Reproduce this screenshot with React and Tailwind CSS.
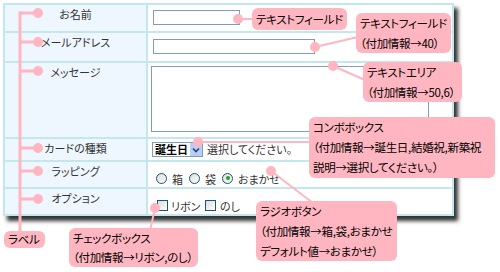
const PINK = '#ffb6c1'

function Callout({ className, children }) {
  return (
    <div
      className={`absolute bg-[#ffb6c1] rounded-[6px] px-[4px] text-[11.5px] tracking-[-0.3px] leading-[20px] text-black whitespace-nowrap ${className}`}
    >
      {children}
    </div>
  )
}

function Radio({ checked }) {
  return (
    <span className="w-[11px] h-[11px] rounded-full border border-[#1c5180] bg-gradient-to-br from-[#dcdcd7] to-white flex items-center justify-center">
      {checked && <span className="w-[4px] h-[4px] rounded-full bg-[#21a121]" />}
    </span>
  )
}

function Check() {
  return (
    <span className="w-[11px] h-[11px] border border-[#1c5180] bg-gradient-to-br from-[#dcdcd7] to-white" />
  )
}

function Row({ label, h, children, last }) {
  return (
    <div className={`flex ${last ? '' : 'border-b-2 border-[#c2e8ee]'}`} style={{ height: h }}>
      <div className="w-[143px] shrink-0 bg-[#eef7ff] border-r-2 border-[#c2e8ee] text-center text-[11px] leading-[13px] pt-[3px] text-[#333]">
        {label}
      </div>
      <div className="flex-1 bg-white">{children}</div>
    </div>
  )
}

export default function App() {
  const branches = [13, 42, 71, 148, 171, 199]

  return (
    <div className="relative w-[500px] h-[272px] bg-white overflow-hidden font-['Noto_Sans_CJK_JP',sans-serif] [font-feature-settings:'palt']">
      <div className="pl-[3px] pt-[3px]">
        <div className="w-[451px] border-2 border-[#c2e8ee] shadow-[4px_5px_4px_rgba(0,0,0,0.8)]">
          <Row label="お名前" h={28}>
            <div className="ml-[5px] mt-[5px] w-[87px] h-[15px] border border-[#7f9db9]" />
          </Row>
          <Row label="メールアドレス" h={30}>
            <div className="ml-[5px] mt-[6px] w-[162px] h-[15px] border border-[#7f9db9]" />
          </Row>
          <Row label="メッセージ" h={76}>
            <div className="ml-[3px] mt-[3px] w-[278px] h-[66px] border border-[#7f9db9]" />
          </Row>
          <Row label="カードの種類" h={23}>
            <div className="ml-[4px] mt-[3px] flex items-center gap-[4px]">
              <div className="w-[51px] h-[15px] border border-[#7f9db9] flex items-center">
                <span className="flex-1 pl-[2px] text-[11px] leading-[13px] font-bold text-black whitespace-nowrap">誕生日</span>
                <span className="w-[12px] h-[13px] shrink-0 bg-[#b9cef5] flex items-center justify-center">
                  <svg width="8" height="6" viewBox="0 0 8 6">
                    <path d="M1 1.5 L4 4.5 L7 1.5" stroke="#26407a" strokeWidth="1.6" fill="none" />
                  </svg>
                </span>
              </div>
              <span className="text-[11px] leading-[13px] text-[#333]">選択してください。</span>
            </div>
          </Row>
          <Row label="ラッピング" h={27}>
            <div className="ml-[8px] mt-[8px] flex items-center text-[11px] leading-[13px] text-[#333]">
              <Radio />
              <span className="ml-[5px] mt-[3px] w-[17px]">箱</span>
              <Radio />
              <span className="ml-[5px] mt-[3px] w-[17px]">袋</span>
              <Radio checked />
              <span className="ml-[5px] mt-[3px]">おまかせ</span>
            </div>
          </Row>
          <Row label="オプション" h={25} last>
            <div className="ml-[9px] mt-[8px] flex items-center text-[11px] leading-[13px] text-[#333]">
              <Check />
              <span className="ml-[3px] mt-[3px] w-[34px]">リボン</span>
              <Check />
              <span className="ml-[4px] mt-[3px]">のし</span>
            </div>
          </Row>
        </div>
      </div>

      <svg className="absolute inset-0" width="500" height="272">
        <line x1="20" y1="11.5" x2="20" y2="234" stroke={PINK} strokeWidth="3" />
        {branches.map((y) => (
          <g key={y}>
            <line x1="19" y1={y} x2="38" y2={y} stroke={PINK} strokeWidth="3" />
            <circle cx="38" cy={y} r="5" fill={PINK} />
          </g>
        ))}
        <line x1="238" y1="19" x2="254" y2="19" stroke={PINK} strokeWidth="2" />
        <circle cx="238" cy="19" r="5" fill={PINK} />
        <line x1="315" y1="47" x2="358" y2="37" stroke={PINK} strokeWidth="2" />
        <circle cx="315" cy="47" r="5" fill={PINK} />
        <line x1="333" y1="66" x2="365" y2="80" stroke={PINK} strokeWidth="2" />
        <circle cx="333" cy="66" r="5" fill={PINK} />
        <line x1="198" y1="142" x2="311" y2="142" stroke={PINK} strokeWidth="2" />
        <circle cx="198" cy="142" r="5" fill={PINK} />
        <line x1="271" y1="171" x2="313" y2="203" stroke={PINK} strokeWidth="2" />
        <circle cx="271" cy="171" r="5" fill={PINK} />
        <line x1="155" y1="208" x2="150" y2="231" stroke={PINK} strokeWidth="2" />
        <circle cx="155" cy="208" r="5" fill={PINK} />
      </svg>

      <Callout className="left-[252px] top-[8px] min-w-[85px] h-[22px] !leading-[22px]">テキストフィールド</Callout>
      <Callout className="left-[356px] top-[13px] min-w-[92px] h-[40px]">
        テキストフィールド
        <br />
        （付加情報→40）
      </Callout>
      <Callout className="left-[363px] top-[62px] min-w-[99px] h-[40px]">
        テキストエリア
        <br />
        （付加情報→50,6）
      </Callout>
      <Callout className="left-[309px] top-[117px] min-w-[186px] h-[61px]">
        コンボボックス
        <br />
        （付加情報→誕生日,結婚祝,新築祝
        <br />
        説明→選択してください。）
      </Callout>
      <Callout className="left-[256px] top-[201px] min-w-[141px] h-[60px]">
        ラジオボタン
        <br />
        （付加情報→箱,袋,おまかせ
        <br />
        デフォルト値→おまかせ）
      </Callout>
      <Callout className="left-[69px] top-[228px] min-w-[129px] h-[39px] !leading-[19px] pt-[1px]">
        チェックボックス
        <br />
        （付加情報→リボン,のし）
      </Callout>
      <Callout className="left-[4px] top-[231px] min-w-[41px] h-[17px] !leading-[17px]">ラベル</Callout>
    </div>
  )
}
